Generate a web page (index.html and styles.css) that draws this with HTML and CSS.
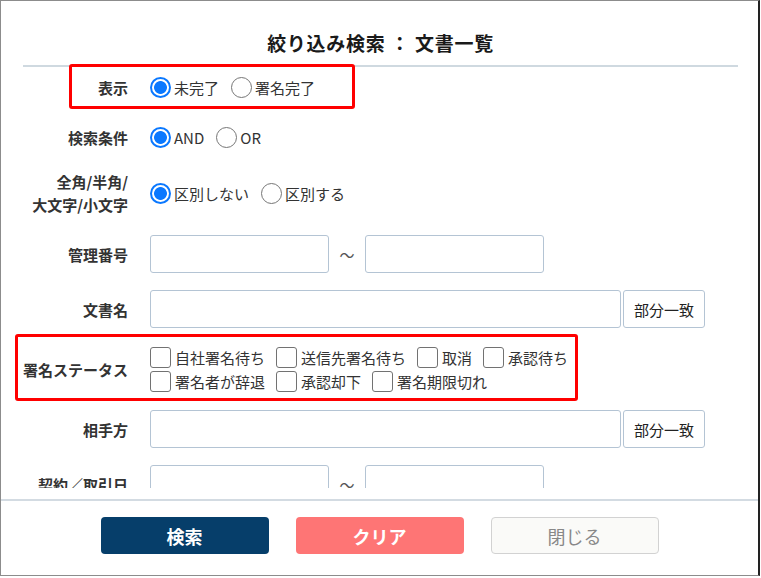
FILE: index.html
```html
<!DOCTYPE html>
<html lang="ja">
<head>
  <meta charset="UTF-8">
  <title>絞り込み検索 : 文書一覧</title>
  <link rel="stylesheet" href="styles.css">
</head>
<body>
  <div class="dialog">
    <div class="dialog-body">
      <h1 class="title">絞り込み検索 ： 文書一覧</h1>

      <div class="form">
        <div class="row row-short">
          <div class="row-label">表示</div>
          <div class="choices">
            <label class="choice"><input type="radio" name="status" checked>未完了</label>
            <label class="choice"><input type="radio" name="status">署名完了</label>
          </div>
        </div>

        <div class="row row-short row-cond">
          <div class="row-label">検索条件</div>
          <div class="choices">
            <label class="choice"><input type="radio" name="cond" checked>AND</label>
            <label class="choice"><input type="radio" name="cond">OR</label>
          </div>
        </div>

        <div class="row row-tall">
          <div class="row-label">全角/半角/<br>大文字/小文字</div>
          <div class="choices">
            <label class="choice"><input type="radio" name="width" checked>区別しない</label>
            <label class="choice"><input type="radio" name="width">区別する</label>
          </div>
        </div>

        <div class="row">
          <div class="row-label">管理番号</div>
          <input type="text" class="field field-short">
          <span class="tilde">～</span>
          <input type="text" class="field field-short">
        </div>

        <div class="row">
          <div class="row-label">文書名</div>
          <input type="text" class="field field-long">
          <button class="btn-match">部分一致</button>
        </div>

        <div class="row row-checks">
          <div class="row-label">署名ステータス</div>
          <div class="checks">
            <label class="check"><input type="checkbox">自社署名待ち</label>
            <label class="check"><input type="checkbox">送信先署名待ち</label>
            <label class="check"><input type="checkbox">取消</label>
            <label class="check"><input type="checkbox">承認待ち</label>
            <label class="check"><input type="checkbox">署名者が辞退</label>
            <label class="check"><input type="checkbox">承認却下</label>
            <label class="check"><input type="checkbox">署名期限切れ</label>
          </div>
        </div>

        <div class="row">
          <div class="row-label">相手方</div>
          <input type="text" class="field field-long">
          <button class="btn-match">部分一致</button>
        </div>

        <div class="row">
          <div class="row-label">契約／取引日</div>
          <input type="text" class="field field-short">
          <span class="tilde">～</span>
          <input type="text" class="field field-short">
        </div>
      </div>

      <!-- 注目箇所の赤枠 -->
      <div class="mark mark-display"></div>
      <div class="mark mark-status"></div>
    </div>

    <div class="dialog-footer">
      <button class="btn btn-search">検索</button>
      <button class="btn btn-clear">クリア</button>
      <button class="btn btn-close">閉じる</button>
    </div>
  </div>
</body>
</html>
```

FILE: styles.css
```css
html, body {
  margin: 0;
  background: #fff;
}
body {
  font-family: "Noto Sans CJK JP", "Noto Sans", sans-serif;
  color: #333;
}
.dialog {
  box-sizing: border-box;
  width: 760px;
  height: 576px;
  border: 1px solid #8c8c8c;
  border-right: 2px solid #222;
  box-shadow: 0 2px 0 #fff, 0 3px 0 #222;
  display: flex;
  flex-direction: column;
}
.dialog-body {
  position: relative;
  height: 487px;
  overflow: hidden;
}
.title {
  margin: 0 20px 0 22px;
  padding-top: 29px;
  height: 35px;
  line-height: 26px;
  font-size: 19px;
  font-weight: bold;
  letter-spacing: 0.7px;
  text-align: center;
  color: #1a1a1a;
  border-bottom: 2px solid #cfd9e0;
}
.form {
  display: flex;
  flex-direction: column;
  gap: 17px;
  padding-top: 3px;
}
.row {
  display: flex;
  align-items: center;
  height: 38px;
}
.row-short {
  height: 34px;
}
.row-cond {
  height: 32px;
}
.row-tall {
  height: 46px;
  margin-bottom: 2px;
}
.row-checks {
  height: 48px;
}
.row-label {
  width: 127px;
  margin-right: 22px;
  text-align: right;
  font-size: 15px;
  font-weight: bold;
  line-height: 23px;
  color: #333;
  flex-shrink: 0;
}
.choices {
  display: flex;
  align-items: center;
  gap: 12px;
}
.choice, .check {
  display: flex;
  align-items: center;
  font-size: 15px;
  color: #333;
}
.choice input {
  appearance: none;
  box-sizing: border-box;
  width: 21px;
  height: 21px;
  margin: 0 3px 0 0;
  border: 1px solid #767676;
  border-radius: 50%;
  background: #fff;
}
.choice input:checked {
  border: 2px solid #0a78ff;
  background: radial-gradient(circle, #0a78ff 0 6px, #fff 6.8px);
}
.checks {
  display: flex;
  flex-wrap: wrap;
  width: 470px;
  column-gap: 11px;
  row-gap: 3px;
}
.check input {
  appearance: none;
  box-sizing: border-box;
  width: 21px;
  height: 21px;
  margin: 0 4px 0 0;
  border: 1px solid #727272;
  border-radius: 3px;
  background: #fff;
}
.field {
  box-sizing: border-box;
  height: 38px;
  margin: 0;
  border: 1px solid #b4c4d4;
  border-radius: 3px;
  background: #fff;
}
.field-short {
  width: 179px;
}
.field-long {
  width: 471px;
}
.tilde {
  width: 36px;
  text-align: center;
  font-size: 15px;
  color: #555;
}
.btn-match {
  box-sizing: border-box;
  height: 38px;
  width: 82px;
  margin-left: 2px;
  padding: 0;
  border: 1px solid #b4c4d4;
  border-radius: 3px;
  background: #fff;
  font-family: inherit;
  font-size: 15px;
  color: #222;
}
.mark {
  position: absolute;
  box-sizing: border-box;
  border: 3px solid #ff0000;
  border-radius: 3px;
}
.mark-display {
  left: 68px;
  top: 63px;
  width: 286px;
  height: 45px;
}
.mark-status {
  left: 14px;
  top: 333px;
  width: 563px;
  height: 67px;
}
.dialog-footer {
  margin-top: 11px;
  border-top: 2px solid #d3dbe2;
  display: flex;
  justify-content: center;
  gap: 27px;
  padding-top: 16px;
}
.btn {
  box-sizing: border-box;
  width: 168px;
  height: 37px;
  border: none;
  border-radius: 4px;
  font-family: inherit;
  font-size: 18px;
  font-weight: bold;
  color: #fff;
}
.btn-search {
  background: #063e6a;
}
.btn-clear {
  background: #fe7575;
}
.btn-close {
  background: #fafaf8;
  border: 1px solid #d2d2d2;
  color: #888;
  font-weight: normal;
}
```
